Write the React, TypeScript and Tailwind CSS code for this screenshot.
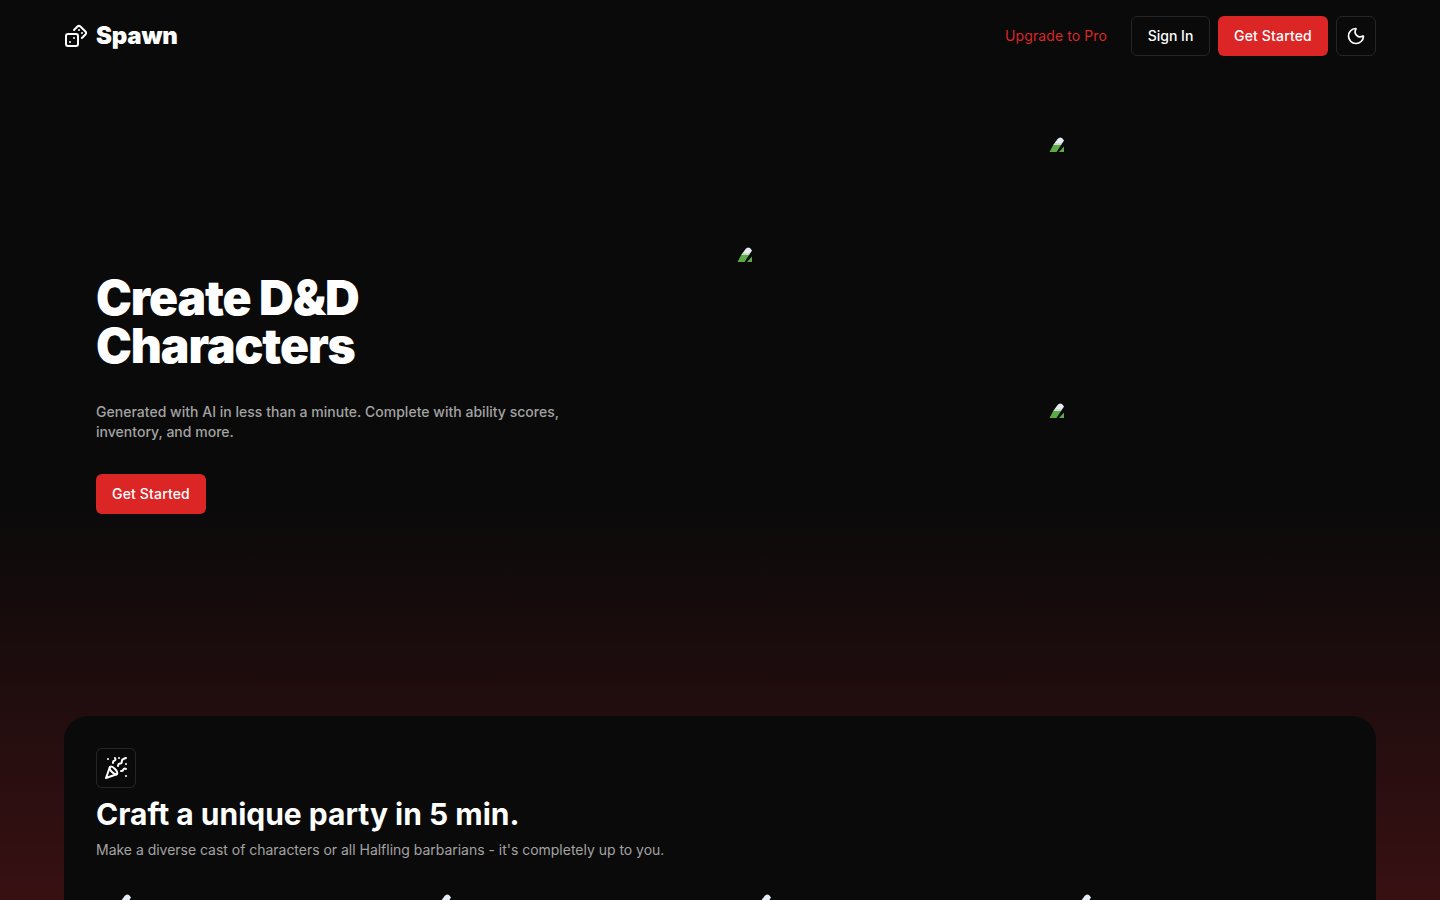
import { Dices, Moon, PartyPopper } from 'lucide-react'

function BrokenImage() {
  return (
    <svg width="16" height="16" viewBox="0 0 16 16" className="block shrink-0">
      <path d="M9 1.5 L11 0.5 L13 1 L15 3.5 L13.4 6 L5.6 6 Z" fill="#e6ebf4" />
      <path d="M5.6 6 L13.4 6 L12.1 8 L4.2 8 Z" fill="#c9dfc4" />
      <path d="M4.2 8 L12.1 8 L7.5 15 L0.5 15 Z" fill="#5cab46" />
      <path d="M15 9.5 L15 15 L10 15 Z" fill="#5cab46" />
    </svg>
  )
}

function CroppedTile() {
  return (
    <div className="h-[6px] overflow-hidden">
      <BrokenImage />
    </div>
  )
}

export default function App() {
  return (
    <div
      className="h-[900px] overflow-hidden bg-[linear-gradient(180deg,#0a0a0a_0px,#0a0a0a_500px,#381012_900px)] text-white"
      style={{ fontFamily: 'Inter, sans-serif' }}
    >
      {/* Nav */}
      <nav className="flex h-[72px] items-center justify-between px-16">
        <div className="flex items-center gap-2">
          <Dices size={24} strokeWidth={2} />
          <span className="text-2xl font-black tracking-[-0.2px]">Spawn</span>
        </div>
        <div className="flex items-center gap-2">
          <a className="mr-4 text-sm font-normal tracking-[0.1px] text-[#dc2626]">Upgrade to Pro</a>
          <button className="h-10 w-[79px] rounded-md border border-[#262626] bg-[#0a0a0a] text-sm font-medium">
            Sign In
          </button>
          <button className="h-10 w-[110px] rounded-md bg-[#dc2626] text-sm font-medium tracking-[0.15px]">
            Get Started
          </button>
          <button className="flex h-10 w-10 items-center justify-center rounded-md border border-[#262626] bg-[#0a0a0a]">
            <Moon size={20} />
          </button>
        </div>
      </nav>

      {/* Hero */}
      <section className="flex h-[644px] px-24">
        <div className="flex w-[641px] shrink-0 flex-col justify-center">
          <h1 className="text-5xl leading-[48px] font-black tracking-[-1.1px]">
            Create D&amp;D
            <br />
            Characters
          </h1>
          <p className="mt-8 max-w-[480px] text-sm leading-5 font-medium tracking-[0.02px] text-[#a3a3a3]">
            Generated with AI in less than a minute. Complete with ability scores, inventory, and more.
          </p>
          <div className="mt-8">
            <button className="h-10 w-[110px] rounded-md bg-[#dc2626] text-sm font-medium tracking-[0.15px]">
              Get Started
            </button>
          </div>
        </div>
        <div className="flex gap-[296px] pt-[65px]">
          <div className="pt-[110px]">
            <BrokenImage />
          </div>
          <div className="flex flex-col gap-[250px]">
            <BrokenImage />
            <BrokenImage />
          </div>
        </div>
      </section>

      {/* Features card */}
      <section className="mx-16 h-[400px] rounded-3xl bg-[#0a0a0a] px-8 pt-8">
        <div className="flex h-10 w-10 items-center justify-center rounded-md border border-[#262626]">
          <PartyPopper size={24} />
        </div>
        <h2 className="mt-2 text-3xl leading-9 font-bold">Craft a unique party in 5 min.</h2>
        <p className="mt-2 text-sm leading-5 tracking-[-0.02px] text-[#a3a3a3]">
          Make a diverse cast of characters or all Halfling barbarians - it's completely up to you.
        </p>
        <div className="mt-[34px] grid grid-cols-[repeat(4,320px)] pl-[20px]">
          <CroppedTile />
          <CroppedTile />
          <CroppedTile />
          <CroppedTile />
        </div>
      </section>
    </div>
  )
}
